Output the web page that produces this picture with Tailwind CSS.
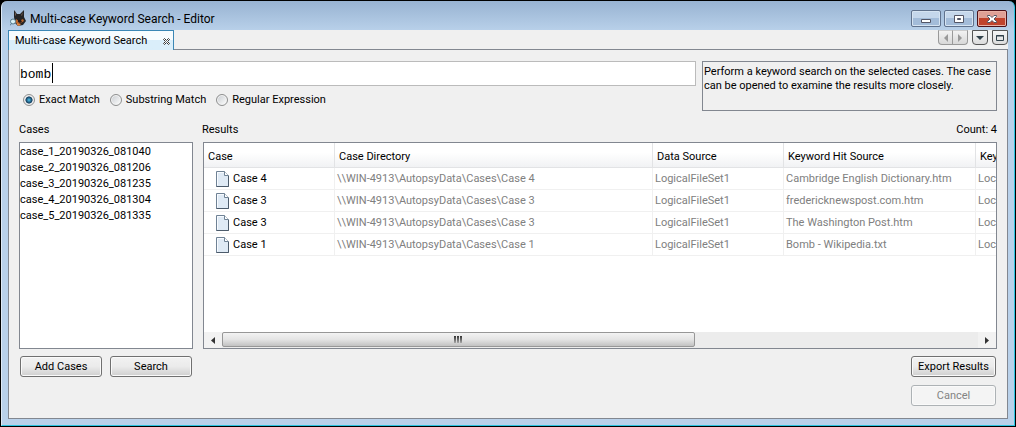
<!DOCTYPE html>
<html lang="en">
<head>
<meta charset="utf-8">
<title>Multi-case Keyword Search - Editor</title>
<script src="https://cdn.jsdelivr.net/npm/@tailwindcss/browser@4"></script>
</head>
<body class="bg-black font-['Tahoma','Roboto',sans-serif] text-[11px] leading-4 text-black">
<svg class="hidden">
  <symbol id="doc" viewBox="0 0 13 16">
    <path d="M.5.5h8l4 4v11H.5z" fill="#dfeaf5" stroke="#6f8295"/>
    <path d="M1.500 14.500V1.500H8" fill="none" stroke="#f8fbff"/>
    <path d="M8.500.5v4h4" fill="#fff" stroke="#6f8295"/>
    <path d="M.5 15.500h12V5" fill="none" stroke="#4c5b6b"/>
  </symbol>
</svg>
<div class="flex min-h-screen flex-col p-px">
<div class="flex flex-1 flex-col rounded-t-md border-r border-b border-l border-l-[#dfeaf6] border-r-[#2cc4e0] border-b-[#2cc4e0] bg-linear-to-b from-[#98b3d2] to-[#b9d1ea] to-[30px] px-[6px] pb-[6px]">
  <header class="flex h-[29px] items-center">
    <svg class="ml-0.5 mt-1 mr-1 h-4 w-4 shrink-0" viewBox="0 0 16 16">
      <path d="M4 0l3 4h3l4-4v7l2 4-3 4-5 1-3-3-1-6z" fill="#252526"/>
      <path d="M5 1l1 3v2L5 5zM13 2l-2 3 1 1z" fill="#6e5a50"/>
      <path d="M6 9l3 2 4-2 1 2-3 2-4 1-2-2z" fill="#b9652c"/>
      <path d="M8 10h3l1 2-2 1-2-1z" fill="#231b1a"/>
      <path d="M7 13l4 1-2 2-2-1z" fill="#e2863e"/>
      <circle cx="3" cy="11.500" r="2.500" fill="#d8f2f7" stroke="#54798b"/>
      <path d="M1.500 13.500L0 15.500" stroke="#54798b"/>
    </svg>
    <h1 class="mt-1.5 grow text-xs">Multi-case Keyword Search - Editor</h1>
    <div class="mt-1.5 mr-px flex gap-[3px]">
      <button aria-label="Minimize" class="flex h-[17px] w-[30px] items-center justify-center rounded-xs border border-[#60728d] bg-linear-to-b from-[#c5d7eb] from-50% to-[#a3bcd9] to-50% shadow-[inset_0_0_0_1px_#d6e4f2]">
        <svg class="h-3 w-3" viewBox="0 0 12 12"><path d="M1.500 6.500h9v3h-9z" fill="#fff" stroke="#535666"/></svg>
      </button>
      <button aria-label="Maximize" class="flex h-[17px] w-[30px] items-center justify-center rounded-xs border border-[#60728d] bg-linear-to-b from-[#c5d7eb] from-50% to-[#a3bcd9] to-50% shadow-[inset_0_0_0_1px_#d6e4f2]">
        <svg class="h-3 w-3" viewBox="0 0 12 12"><path d="M1.500 2.500h9v7h-9z" fill="#fff" stroke="#535666"/><path d="M4.500 5.500h3v1h-3z" fill="#b3c8e0" stroke="#535666"/></svg>
      </button>
      <button aria-label="Close" class="flex h-[17px] w-[30px] items-center justify-center rounded-xs border border-[#4d1118] bg-linear-to-b from-[#dfa096] from-50% to-[#c0432c] to-50% shadow-[inset_0_0_0_1px_#e8b0a5]">
        <svg class="h-3 w-3" viewBox="0 0 12 12"><path d="M1.500 2.500h2.500l2 2 2-2h2.500v1L8 6l2.500 2.500v1H8l-2-2-2 2H1.500v-1L4 6 1.500 3.500z" fill="#fff" stroke="#535666"/></svg>
      </button>
    </div>
  </header>
  <div class="flex h-5 items-stretch bg-[#f0f0f0]">
    <div class="flex w-[166px] items-center justify-between border border-b-0 border-[#3c87b5] bg-linear-to-b from-[#f8fcfe] from-50% to-[#daeefa] to-50% pl-1.5 pr-[3px]">
      <span>Multi-case Keyword Search</span>
      <button aria-label="Close tab" class="mt-0.5"><svg class="h-[7px] w-[7px]" viewBox="0 0 7 7"><path d="M1.500.5L3.500 2.500 5.500.5l1 1-2 2 2 2-1 1-2-2-2 2-1-1 2-2-2-2z" fill="#fff" stroke="#333"/></svg></button>
    </div>
    <div class="flex grow justify-end border-b border-[#828790]">
      <div class="flex h-[15px] text-[#999]">
        <button aria-label="Scroll left" class="flex w-[15px] items-center justify-center rounded-bl-sm border border-[#999] border-t-[#ccc] bg-linear-to-b from-[#f2f2f2] to-[#d8d8d8]"><svg class="h-2 w-2" viewBox="0 0 8 8"><path d="M6 0v8L2 4z" fill="currentColor"/></svg></button>
        <button aria-label="Scroll right" class="mr-1 flex w-[15px] items-center justify-center rounded-br-sm border border-l-0 border-[#999] border-t-[#ccc] bg-linear-to-b from-[#f2f2f2] to-[#d8d8d8]"><svg class="h-2 w-2" viewBox="0 0 8 8"><path d="M2 0v8l4-4z" fill="currentColor"/></svg></button>
        <button aria-label="Show tab list" class="mr-1 flex w-4 items-center justify-center rounded-b-sm border border-[#555] bg-linear-to-b from-[#f6f6f6] to-[#dcdcdc]"><svg class="h-2 w-2" viewBox="0 0 8 8"><path d="M0 2h8L4 6z" fill="#31414a"/></svg></button>
        <button aria-label="Maximize panel" class="flex w-4 items-center justify-center rounded-b-sm border border-[#555] bg-linear-to-b from-[#f6f6f6] to-[#dcdcdc]"><svg class="h-2 w-2" viewBox="0 0 8 8"><path d="M.5 1.500h7v5h-7zM0 2h8" fill="none" stroke="#31414a"/></svg></button>
      </div>
    </div>
  </div>
  <main class="flex flex-1 flex-col border border-t-0 border-[#828790] bg-[#f0f0f0] px-[10px] pt-[11px] pb-3">
    <div class="flex gap-1.5">
      <div class="min-w-0 grow">
        <div class="relative">
          <input type="text" aria-label="Keyword" value="bomb" class="block h-[25px] w-full border border-[#bbb] bg-white pt-0.5 font-['Liberation_Mono','Courier_New',monospace] text-[13px]">
          <span class="absolute top-0.5 left-[33px] h-5 w-px bg-black"></span>
        </div>
        <fieldset class="mt-1.5 ml-1 flex gap-2.5">
          <label class="flex items-center gap-1"><input type="radio" name="mode" checked class="h-3 w-3 appearance-none rounded-full border border-[#8e8f8f] bg-radial from-[#49b5df] from-5% via-[#123c5c] via-45% to-[#eee] to-55%">Exact Match</label>
          <label class="flex items-center gap-1"><input type="radio" name="mode" class="h-3 w-3 appearance-none rounded-full border border-[#8e8f8f] bg-linear-to-br from-[#c8ccd0] to-white shadow-[inset_0_0_0_1px_#f4f4f4]">Substring Match</label>
          <label class="flex items-center gap-1"><input type="radio" name="mode" class="h-3 w-3 appearance-none rounded-full border border-[#8e8f8f] bg-linear-to-br from-[#c8ccd0] to-white shadow-[inset_0_0_0_1px_#f4f4f4]">Regular Expression</label>
        </fieldset>
      </div>
      <p class="h-[50px] w-[295px] shrink-0 border border-[#828790] px-px pt-[3px] leading-[14px]">Perform a keyword search on the selected cases. The case can be opened to examine the results more closely.</p>
    </div>
    <div class="mt-[11px] flex flex-1 gap-[10px]">
      <section class="flex w-[174px] shrink-0 flex-col">
        <h2>Cases</h2>
        <ul class="mt-1 flex-1 border border-[#828790] bg-white pt-px">
          <li>case_1_20190326_081040</li>
          <li>case_2_20190326_081206</li>
          <li>case_3_20190326_081235</li>
          <li>case_4_20190326_081304</li>
          <li>case_5_20190326_081335</li>
        </ul>
      </section>
      <section class="flex min-w-0 flex-1 flex-col">
        <div class="-ml-px flex justify-between"><h2>Results</h2><span>Count: 4</span></div>
        <div class="mt-1 flex flex-1 flex-col overflow-hidden border border-[#828790] bg-white">
          <div class="flex-1 overflow-hidden">
            <table class="w-[900px] table-fixed border-separate border-spacing-0 whitespace-nowrap">
              <colgroup><col class="w-[131px]"><col class="w-[318px]"><col class="w-[131px]"><col class="w-[192px]"><col></colgroup>
              <thead class="text-left">
                <tr class="h-[25px] *:border-r *:border-b *:border-[#e2e3e5] *:bg-linear-to-b *:from-white *:from-40% *:to-[#f1f2f4] *:pl-1 *:pt-[3px] *:font-normal">
                  <th>Case</th><th>Case Directory</th><th>Data Source</th><th>Keyword Hit Source</th><th>Keyword</th>
                </tr>
              </thead>
              <tbody class="text-[#808080]">
                <tr class="h-[22px] *:border-r *:border-b *:border-[#f0f0f0] *:pl-0.5"><td><span class="flex items-center gap-1 pl-[10px] text-black"><svg class="h-4 w-[13px]"><use href="#doc"/></svg>Case 4</span></td><td>\\WIN-4913\AutopsyData\Cases\Case 4</td><td>LogicalFileSet1</td><td>Cambridge English Dictionary.htm</td><td>Local</td></tr>
                <tr class="h-[22px] *:border-r *:border-b *:border-[#f0f0f0] *:pl-0.5"><td><span class="flex items-center gap-1 pl-[10px] text-black"><svg class="h-4 w-[13px]"><use href="#doc"/></svg>Case 3</span></td><td>\\WIN-4913\AutopsyData\Cases\Case 3</td><td>LogicalFileSet1</td><td>fredericknewspost.com.htm</td><td>Local</td></tr>
                <tr class="h-[22px] *:border-r *:border-b *:border-[#f0f0f0] *:pl-0.5"><td><span class="flex items-center gap-1 pl-[10px] text-black"><svg class="h-4 w-[13px]"><use href="#doc"/></svg>Case 3</span></td><td>\\WIN-4913\AutopsyData\Cases\Case 3</td><td>LogicalFileSet1</td><td>The Washington Post.htm</td><td>Local</td></tr>
                <tr class="h-[22px] *:border-r *:border-b *:border-[#f0f0f0] *:pl-0.5"><td><span class="flex items-center gap-1 pl-[10px] text-black"><svg class="h-4 w-[13px]"><use href="#doc"/></svg>Case 1</span></td><td>\\WIN-4913\AutopsyData\Cases\Case 1</td><td>LogicalFileSet1</td><td>Bomb - Wikipedia.txt</td><td>Local</td></tr>
              </tbody>
            </table>
          </div>
          <div class="flex h-4 items-stretch bg-[#ececec]">
            <button aria-label="Scroll results left" class="flex w-[18px] items-center justify-center bg-[#f2f2f2]"><svg class="h-[7px] w-1" viewBox="0 0 4 7"><path d="M4 0v7L0 3.500z" fill="#333"/></svg></button>
            <div class="grow">
              <div class="flex h-[15px] w-5/8 items-center justify-center gap-px rounded-xs border border-[#979797] bg-linear-to-b from-[#f3f3f3] via-[#e4e4e4] via-50% to-[#c2c2c2]">
                <i class="h-[7px] w-0.5 bg-linear-to-b from-[#333] to-[#aaa]"></i><i class="h-[7px] w-0.5 bg-linear-to-b from-[#333] to-[#aaa]"></i><i class="h-[7px] w-0.5 bg-linear-to-b from-[#333] to-[#aaa]"></i>
              </div>
            </div>
            <button aria-label="Scroll results right" class="flex w-[18px] items-center justify-center bg-[#f2f2f2]"><svg class="h-[7px] w-1" viewBox="0 0 4 7"><path d="M0 0v7l4-3.500z" fill="#333"/></svg></button>
          </div>
        </div>
      </section>
    </div>
    <div class="mt-[7px] flex items-start justify-between px-px">
      <div class="flex gap-2">
        <button class="h-[21px] w-[82px] rounded-[3px] border border-[#707070] bg-linear-to-b from-[#f2f2f2] via-[#ebebeb] via-50% to-[#cfcfcf] shadow-[inset_0_0_0_1px_#fafafa]">Add Cases</button>
        <button class="h-[21px] w-[82px] rounded-[3px] border border-[#707070] bg-linear-to-b from-[#f2f2f2] via-[#ebebeb] via-50% to-[#cfcfcf] shadow-[inset_0_0_0_1px_#fafafa]">Search</button>
      </div>
      <div class="flex flex-col gap-2">
        <button class="h-[21px] w-[85px] rounded-[3px] border border-[#707070] bg-linear-to-b from-[#f2f2f2] via-[#ebebeb] via-50% to-[#cfcfcf] shadow-[inset_0_0_0_1px_#fafafa]">Export Results</button>
        <button disabled class="h-[21px] w-[85px] rounded-[3px] border border-[#adb2b5] bg-[#f4f4f4] text-[#838383] shadow-[inset_0_0_0_1px_#fafafa]">Cancel</button>
      </div>
    </div>
  </main>
</div>
</div>
</body>
</html>
